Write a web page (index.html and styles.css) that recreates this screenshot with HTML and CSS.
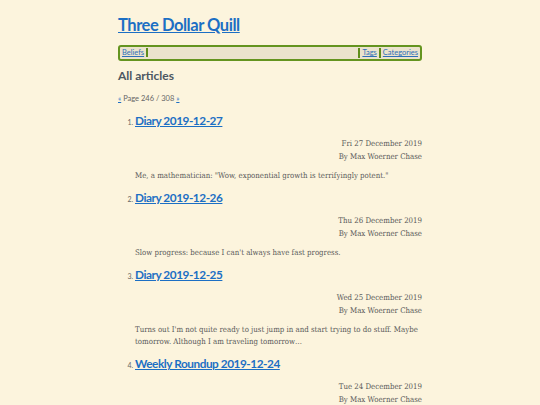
FILE: index.html
```html
<!DOCTYPE html>
<html>
<head>
<meta charset="utf-8">
<link rel="stylesheet" href="styles.css">
</head>
<body>
<div class="page">
  <header>
    <h1 class="site-title"><a href="#">Three Dollar Quill</a></h1>
    <nav class="nav">
      <div class="nav-left"><a href="#">Beliefs</a></div>
      <div class="nav-right"><a href="#">Tags</a><a href="#">Categories</a></div>
    </nav>
  </header>
  <main>
    <h2 class="section-title">All articles</h2>
    <p class="pager"><a href="#">«</a> Page 246 / 308 <a href="#">»</a></p>
    <ol class="articles">
      <li>
        <h3 class="art-title"><a href="#">Diary 2019-12-27</a></h3>
        <div class="meta"><div>Fri 27 December 2019</div><div>By Max Woerner Chase</div></div>
        <p class="summary">Me, a mathematician: "Wow, exponential growth is terrifyingly potent."</p>
      </li>
      <li>
        <h3 class="art-title"><a href="#">Diary 2019-12-26</a></h3>
        <div class="meta"><div>Thu 26 December 2019</div><div>By Max Woerner Chase</div></div>
        <p class="summary">Slow progress: because I can't always have fast progress.</p>
      </li>
      <li>
        <h3 class="art-title"><a href="#">Diary 2019-12-25</a></h3>
        <div class="meta"><div>Wed 25 December 2019</div><div>By Max Woerner Chase</div></div>
        <p class="summary">Turns out I'm not quite ready to just jump in and start trying to do stuff. Maybe tomorrow. Although I am traveling tomorrow…</p>
      </li>
      <li>
        <h3 class="art-title"><a href="#">Weekly Roundup 2019-12-24</a></h3>
        <div class="meta"><div>Tue 24 December 2019</div><div>By Max Woerner Chase</div></div>
        <p class="summary">Progress this week.</p>
      </li>
    </ol>
  </main>
</div>
</body>
</html>
```
FILE: styles.css
```css
html, body {
  margin: 0;
  padding: 0;
  background: #fcf4dd;
}
body {
  font-family: "DejaVu Serif", "Liberation Serif", serif;
  font-stretch: condensed;
  font-size: 7.8px;
  line-height: 12.5px;
  color: #5a5a5a;
}
.page {
  width: 304px;
  margin: 0 auto;
  padding-top: 14px;
}
a {
  color: #1c6fc4;
}
.site-title {
  margin: 0;
  font-family: Lato, "Noto Sans", sans-serif;
  font-size: 16.5px;
  letter-spacing: -0.45px;
  line-height: 22px;
  font-weight: 700;
}
.nav {
  margin-top: 9px;
  height: 12px;
  border: 2px solid #64941f;
  border-radius: 3px;
  background: #ebe3cd;
  display: flex;
  justify-content: space-between;
  align-items: center;
  font-family: Lato, "Noto Sans", sans-serif;
  font-size: 7.5px;
  line-height: 10px;
  padding: 0 2px;
}
.nav a {
  color: #2e6fb8;
}
.nav-left a {
  padding-right: 2px;
  border-right: 2px solid #5f8d1c;
}
.nav-right {
  display: flex;
}
.nav-right a {
  padding-left: 2px;
  margin-left: 2px;
  border-left: 2px solid #5f8d1c;
}
.section-title {
  margin: 7px 0 0;
  font-family: Lato, "Noto Sans", sans-serif;
  font-size: 12px;
  line-height: 16px;
  font-weight: 700;
  color: #4c5762;
}
.pager {
  margin: 9px 0 0;
  font-family: Lato, "Noto Sans", sans-serif;
  font-size: 7.5px;
  line-height: 12px;
  color: #666;
}
.articles {
  margin: 8px 0 0;
  padding-left: 17px;
}
.articles li {
  margin-bottom: 8px;
}
.articles li::marker {
  font-family: Lato, "Noto Sans", sans-serif;
  font-size: 7px;
  color: #666;
}
.art-title {
  margin: 0;
  font-family: Lato, "Noto Sans", sans-serif;
  font-size: 11.8px;
  letter-spacing: -0.45px;
  line-height: 16px;
  font-weight: 700;
}
.meta {
  margin-top: 9px;
  text-align: right;
}
.summary {
  margin: 7px 0 0;
  line-height: 12px;
}
```
